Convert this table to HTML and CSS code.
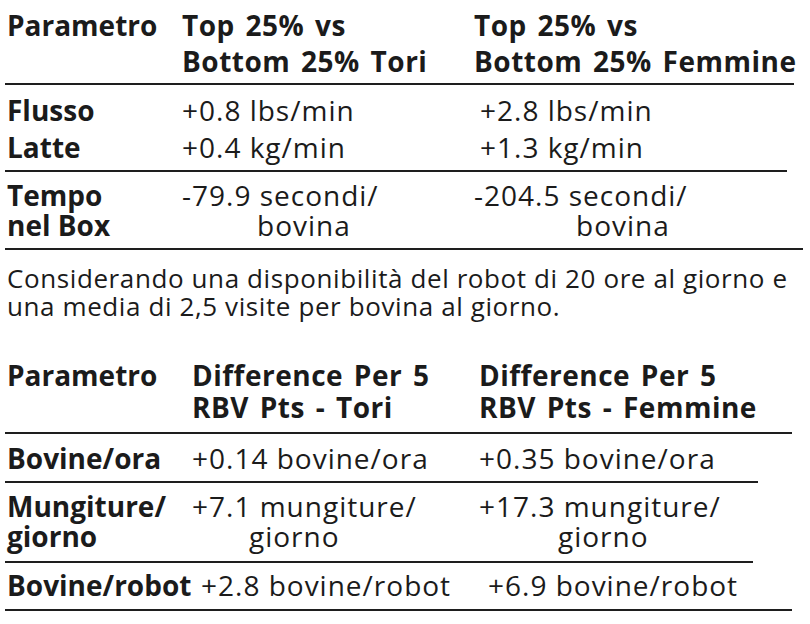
FILE: index.html
```html
<!DOCTYPE html>
<html lang="it">
<head>
<meta charset="utf-8">
<title>Parametri robot</title>
<link rel="stylesheet" href="styles.css">
</head>
<body>
<div class="page">
  <section class="tbl t1">
    <div class="row head w794">
      <div class="cell c1">Parametro</div>
      <div class="cell c2 hd">Top 25% vs<br>Bottom 25% Tori</div>
      <div class="cell c3 hd">Top 25% vs<br>Bottom 25% Femmine</div>
    </div>
    <div class="row flow w787">
      <div class="cell c1 lbl">Flusso<br>Latte</div>
      <div class="cell c2 val">+0.8 lbs/min<br>+0.4 kg/min</div>
      <div class="cell c3 val sh6">+2.8 lbs/min<br>+1.3 kg/min</div>
    </div>
    <div class="row box w803">
      <div class="cell c1 lbl">Tempo<br>nel Box</div>
      <div class="cell c2 val">-79.9 secondi/<span class="ind i75">bovina</span></div>
      <div class="cell c3 val">-204.5 secondi/<span class="ind i102">bovina</span></div>
    </div>
  </section>

  <p class="note"><span class="ln">Considerando una disponibilità del robot di 20 ore al giorno e</span><span class="ln">una media di 2,5 visite per bovina al giorno.</span></p>

  <section class="tbl t2">
    <div class="row head2 w792">
      <div class="cell c1">Parametro</div>
      <div class="cell c2 hd">Difference Per 5<br>RBV Pts - Tori</div>
      <div class="cell c3 hd">Difference Per 5<br>RBV Pts - Femmine</div>
    </div>
    <div class="row ora w758">
      <div class="cell c1 lbl">Bovine/ora</div>
      <div class="cell c2 val">+0.14 bovine/ora</div>
      <div class="cell c3 val">+0.35 bovine/ora</div>
    </div>
    <div class="row mung w753">
      <div class="cell c1 lbl">Mungiture/<br>giorno</div>
      <div class="cell c2 val">+7.1 mungiture/<span class="ind i57">giorno</span></div>
      <div class="cell c3 val">+17.3 mungiture/<span class="ind i79">giorno</span></div>
    </div>
    <div class="row robot w792">
      <div class="cell c1 lbl">Bovine/robot</div>
      <div class="cell c2 val sh9">+2.8 bovine/robot</div>
      <div class="cell c3 val sh9">+6.9 bovine/robot</div>
    </div>
  </section>
</div>
</body>
</html>
```

FILE: styles.css
```css
html, body {
  margin: 0;
  padding: 0;
  background: #ffffff;
}

body {
  color: #1b1b1b;
  font-family: "Open Sans", "Noto Sans", sans-serif;
}

.page {
  width: 810px;
  height: 624px;
  padding-left: 5px;
  box-sizing: border-box;
  overflow: hidden;
}

.row {
  display: grid;
  border-bottom: 2px solid #1e1e1e;
  padding-left: 2px;
  box-sizing: border-box;
  font-size: 28px;
  font-weight: 700;
}

.t1 .row { grid-template-columns: 175px 292px 1fr; }
.t2 .row { grid-template-columns: 185px 287px 1fr; }

.cell { white-space: nowrap; }

.hd {
  letter-spacing: 0.5px;
  word-spacing: 3px;
}

.val {
  font-weight: 400;
  letter-spacing: 1px;
}

.ind { display: block; }
.i75 { padding-left: 75px; }
.i102 { padding-left: 102px; }
.i57 { padding-left: 57px; }
.i79 { padding-left: 79px; }

.sh6 { padding-left: 6px; }
.sh9 { padding-left: 9px; }

/* row widths (line end x minus 5px page offset) */
.w794 { width: 789px; }
.w787 { width: 782px; }
.w803 { width: 798px; }
.w792 { width: 787px; }
.w758 { width: 753px; }
.w753 { width: 748px; }

/* table 1 rows */
.head { line-height: 36px; padding-top: 7px; padding-bottom: 4px; }
.flow { line-height: 37px; padding-top: 7px; padding-bottom: 4px; }
.box  { line-height: 30px; padding-top: 8px; padding-bottom: 8px; }

/* note */
.note {
  margin: 14px 0 0 2px;
  font-size: 26px;
  line-height: 28px;
  font-weight: 400;
  letter-spacing: 0.6px;
}
.note .ln { display: block; white-space: nowrap; }

/* table 2 rows */
.t2 { margin-top: 39px; }
.head2 { line-height: 32px; padding-top: 0; padding-bottom: 9px; }
.ora   { line-height: 36px; padding-top: 6px; padding-bottom: 5px; }
.mung  { line-height: 30px; padding-top: 8px; padding-bottom: 10px; }
.robot { line-height: 36px; padding-top: 4px; padding-bottom: 6px; }
```
